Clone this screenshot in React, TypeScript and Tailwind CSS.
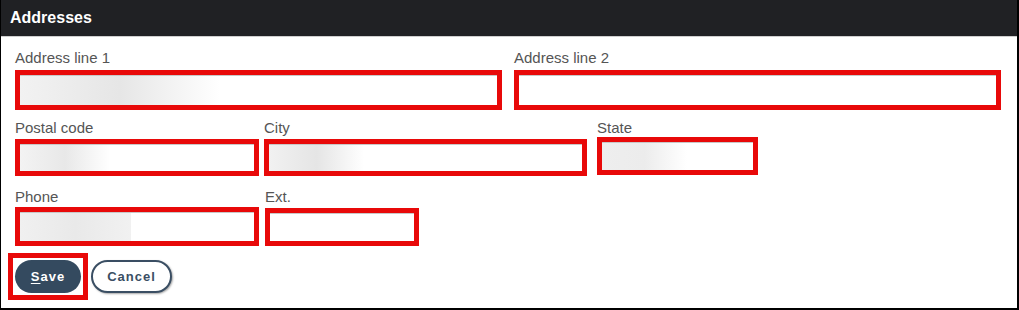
import React from "react";

type FieldProps = {
  label: string;
  width: string;
  boxHeight: string;
  gap: string;
  blur?: React.ReactNode;
};

function Field({ label, width, boxHeight, gap, blur }: FieldProps) {
  return (
    <div className={`flex flex-col ${width}`}>
      <label className="block text-[15px] leading-[16px] text-[#555555]">{label}</label>
      <div
        className={`${gap} ${boxHeight} flex border-[5px] border-[#e80909] bg-white`}
      >
        <div className="flex h-full w-full border-t border-[#c8c8c8]">{blur}</div>
      </div>
    </div>
  );
}

export default function App() {
  return (
    <div
      className="h-[310px] w-[1019px] border-b-2 border-l border-r-2 border-black bg-white"
      style={{ fontFamily: '"Liberation Sans", Arial, sans-serif' }}
    >
      <div className="flex h-[37px] items-center border-b border-[#cfcfcf] bg-[#202124] px-[9px]">
        <h2 className="text-[16px] font-bold leading-none text-white">Addresses</h2>
      </div>

      <div className="px-[14px] pt-[13px]">
        {/* row 1 */}
        <div className="flex gap-[12px]">
          <Field
            label="Address line 1"
            width="w-[487px]"
            boxHeight="h-[40px]"
            gap="mt-[4px]"
            blur={
              <div className="h-full w-[200px] bg-linear-to-r from-[#f2f2f2] via-[#e6e6e6] to-white" />
            }
          />
          <Field label="Address line 2" width="w-[487px]" boxHeight="h-[40px]" gap="mt-[4px]" />
        </div>

        {/* row 2 */}
        <div className="mt-[10px] flex">
          <Field
            label="Postal code"
            width="w-[244px]"
            boxHeight="h-[37px]"
            gap="mt-[3px]"
            blur={
              <div className="h-full w-[90px] bg-linear-to-r from-[#f3f3f3] via-[#e8e8e8] to-white" />
            }
          />
          <div className="ml-[5px]">
            <Field
              label="City"
              width="w-[323px]"
              boxHeight="h-[37px]"
              gap="mt-[3px]"
              blur={
                <div className="h-full w-[95px] bg-linear-to-r from-[#f1f1f1] via-[#e5e5e5] to-white" />
              }
            />
          </div>
          <div className="ml-[10px]">
            <Field
              label="State"
              width="w-[161px]"
              boxHeight="h-[38px]"
              gap="mt-[1px]"
              blur={
                <div className="h-full w-[85px] bg-linear-to-r from-[#eeeeee] via-[#ececec] to-white" />
              }
            />
          </div>
        </div>

        {/* row 3 */}
        <div className="mt-[13px] flex">
          <Field
            label="Phone"
            width="w-[244px]"
            boxHeight="h-[39px]"
            gap="mt-[2px]"
            blur={
              <div className="h-full w-[111px] bg-linear-to-r from-[#f0f0f0] via-[#e9e9e9] to-[#f1f1f1]" />
            }
          />
          <div className="ml-[6px]">
            <Field label="Ext." width="w-[154px]" boxHeight="h-[38px]" gap="mt-[3px]" />
          </div>
        </div>

        {/* buttons */}
        <div className="mt-[7px] flex items-center gap-[3px]">
          <div className="-ml-[7px] border-[5px] border-[#e80909] p-[2px]">
            <button
              type="button"
              className="flex h-[33px] w-[66px] items-center justify-center rounded-full bg-[#344a5f] text-[13px] font-bold tracking-[1px] text-white"
            >
              <span className="underline underline-offset-2">S</span>ave
            </button>
          </div>
          <button
            type="button"
            className="flex h-[33px] w-[81px] items-center justify-center rounded-full border-2 border-[#3a4e63] bg-white text-[13px] font-bold tracking-[1px] text-[#3a4e63] shadow-[1px_1px_2px_rgba(0,0,0,0.35)]"
          >
            Cancel
          </button>
        </div>
      </div>
    </div>
  );
}
